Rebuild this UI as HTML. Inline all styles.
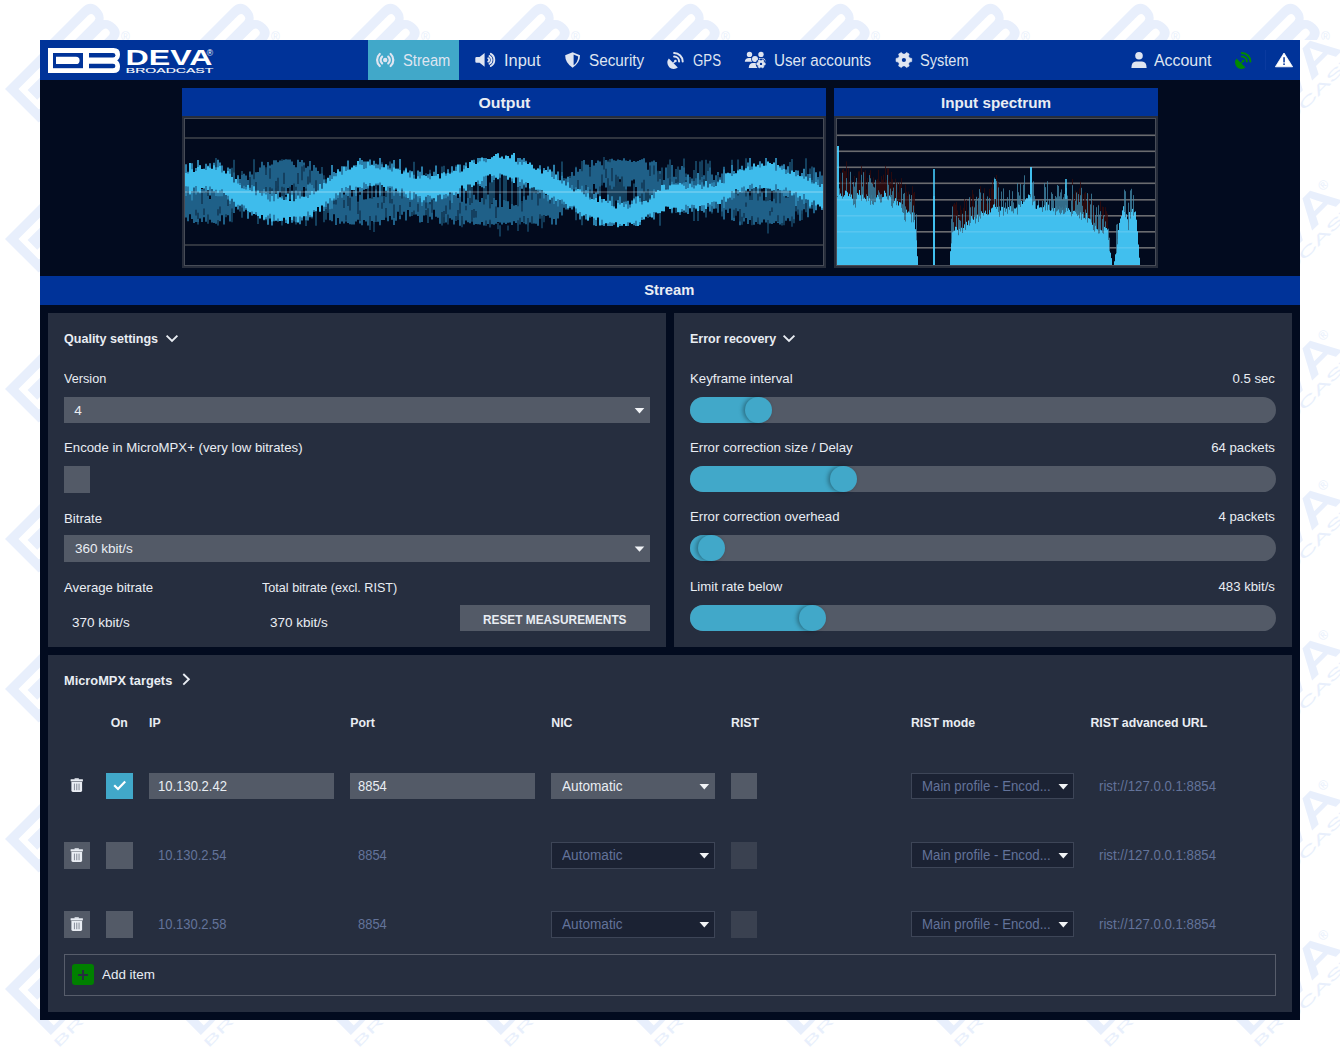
<!DOCTYPE html>
<html><head><meta charset="utf-8"><style>
html,body{margin:0;padding:0}
body{width:1340px;height:1060px;position:relative;overflow:hidden;background:#fff;font-family:"Liberation Sans",sans-serif}
.t{position:absolute;white-space:pre}
.r{position:absolute}
svg{position:absolute;overflow:visible}
</style></head><body>
<svg style="left:0;top:0" width="1340" height="1060"><defs><g id="wb"><path d="M0 0H65.5Q72 0 72 6.3Q72 10.6 69.2 12.5Q72 14.4 72 18.7Q72 25 65.5 25H0Z" fill="#e8effc"/><rect x="5" y="5" width="30" height="15.2" fill="#fff"/><path d="M8 8.8H28Q31.6 8.8 31.6 12.4Q31.6 16 28 16H8Z" fill="#e8effc"/><path d="M41 5H65Q67.4 5 67.4 7.2Q67.4 9.4 65 9.4H41Z" fill="#fff"/><path d="M41 15.8H65Q67.4 15.8 67.4 18Q67.4 20.2 65 20.2H41Z" fill="#fff"/></g><g id="wt"><text x="78" y="17" font-family="Liberation Sans" font-weight="700" font-size="21.5" fill="#e8effc" textLength="86" lengthAdjust="spacingAndGlyphs">DEVA</text><text x="159.5" y="7" font-family="Liberation Sans" font-size="6.5" fill="#e8effc">®</text><text x="78" y="24.8" font-family="Liberation Sans" font-size="6.6" fill="#e8effc" textLength="87.5" lengthAdjust="spacingAndGlyphs">BROADCAST</text></g><clipPath id="cT"><rect x="0" y="0" width="1340" height="40"/></clipPath><clipPath id="cB"><rect x="0" y="1020" width="1340" height="40"/></clipPath><clipPath id="cL"><rect x="0" y="40" width="40" height="980"/></clipPath><clipPath id="cR"><rect x="1300" y="40" width="40" height="980"/></clipPath></defs><g clip-path="url(#cT)"><use href="#wb" transform="translate(-156.3 96.3) rotate(-45) scale(1.9)"/><text x="-29" y="41" font-family="Liberation Sans" font-size="12" fill="#e8effc">®</text><use href="#wb" transform="translate(-6.3 96.3) rotate(-45) scale(1.9)"/><text x="121" y="41" font-family="Liberation Sans" font-size="12" fill="#e8effc">®</text><use href="#wb" transform="translate(143.7 96.3) rotate(-45) scale(1.9)"/><text x="271" y="41" font-family="Liberation Sans" font-size="12" fill="#e8effc">®</text><use href="#wb" transform="translate(293.7 96.3) rotate(-45) scale(1.9)"/><text x="421" y="41" font-family="Liberation Sans" font-size="12" fill="#e8effc">®</text><use href="#wb" transform="translate(443.7 96.3) rotate(-45) scale(1.9)"/><text x="571" y="41" font-family="Liberation Sans" font-size="12" fill="#e8effc">®</text><use href="#wb" transform="translate(593.7 96.3) rotate(-45) scale(1.9)"/><text x="721" y="41" font-family="Liberation Sans" font-size="12" fill="#e8effc">®</text><use href="#wb" transform="translate(743.7 96.3) rotate(-45) scale(1.9)"/><text x="871" y="41" font-family="Liberation Sans" font-size="12" fill="#e8effc">®</text><use href="#wb" transform="translate(893.7 96.3) rotate(-45) scale(1.9)"/><text x="1021" y="41" font-family="Liberation Sans" font-size="12" fill="#e8effc">®</text><use href="#wb" transform="translate(1043.7 96.3) rotate(-45) scale(1.9)"/><text x="1171" y="41" font-family="Liberation Sans" font-size="12" fill="#e8effc">®</text><use href="#wb" transform="translate(1193.7 96.3) rotate(-45) scale(1.9)"/><text x="1321" y="41" font-family="Liberation Sans" font-size="12" fill="#e8effc">®</text><use href="#wb" transform="translate(1343.7 96.3) rotate(-45) scale(1.9)"/><text x="1471" y="41" font-family="Liberation Sans" font-size="12" fill="#e8effc">®</text></g><g clip-path="url(#cB)"><use href="#wt" transform="translate(-229.6 1119.6) rotate(-45) scale(1.9)"/><use href="#wt" transform="translate(-79.6 1119.6) rotate(-45) scale(1.9)"/><use href="#wt" transform="translate(70.4 1119.6) rotate(-45) scale(1.9)"/><use href="#wt" transform="translate(220.4 1119.6) rotate(-45) scale(1.9)"/><use href="#wt" transform="translate(370.4 1119.6) rotate(-45) scale(1.9)"/><use href="#wt" transform="translate(520.4 1119.6) rotate(-45) scale(1.9)"/><use href="#wt" transform="translate(670.4 1119.6) rotate(-45) scale(1.9)"/><use href="#wt" transform="translate(820.4 1119.6) rotate(-45) scale(1.9)"/><use href="#wt" transform="translate(970.4 1119.6) rotate(-45) scale(1.9)"/><use href="#wt" transform="translate(1120.4 1119.6) rotate(-45) scale(1.9)"/><use href="#wt" transform="translate(1270.4 1119.6) rotate(-45) scale(1.9)"/></g><g clip-path="url(#cL)"><use href="#wb" transform="translate(5.0 -61.0) rotate(-45) scale(1.9)"/><use href="#wb" transform="translate(5.0 89.0) rotate(-45) scale(1.9)"/><use href="#wb" transform="translate(5.0 239.0) rotate(-45) scale(1.9)"/><use href="#wb" transform="translate(5.0 389.0) rotate(-45) scale(1.9)"/><use href="#wb" transform="translate(5.0 539.0) rotate(-45) scale(1.9)"/><use href="#wb" transform="translate(5.0 689.0) rotate(-45) scale(1.9)"/><use href="#wb" transform="translate(5.0 839.0) rotate(-45) scale(1.9)"/><use href="#wb" transform="translate(5.0 989.0) rotate(-45) scale(1.9)"/><use href="#wb" transform="translate(5.0 1139.0) rotate(-45) scale(1.9)"/></g><g clip-path="url(#cR)"><use href="#wt" transform="translate(1087.6 257.2) rotate(-45) scale(2.0)"/><use href="#wt" transform="translate(1087.6 407.2) rotate(-45) scale(2.0)"/><use href="#wt" transform="translate(1087.6 557.2) rotate(-45) scale(2.0)"/><use href="#wt" transform="translate(1087.6 707.2) rotate(-45) scale(2.0)"/><use href="#wt" transform="translate(1087.6 857.2) rotate(-45) scale(2.0)"/><use href="#wt" transform="translate(1087.6 1007.2) rotate(-45) scale(2.0)"/><use href="#wt" transform="translate(1087.6 1157.2) rotate(-45) scale(2.0)"/><use href="#wt" transform="translate(1087.6 1307.2) rotate(-45) scale(2.0)"/><use href="#wt" transform="translate(1087.6 1457.2) rotate(-45) scale(2.0)"/></g></svg><div class="r" style="left:40px;top:40px;width:1260px;height:980px;background:#020b1f;"></div><div class="r" style="left:40px;top:40px;width:1260px;height:40px;background:#003399;"></div><div class="r" style="left:368px;top:40px;width:91px;height:40px;background:#41a8c9;"></div><svg style="left:0;top:0" width="1340" height="120"><path d="M48 48H113.5Q120 48 120 54.3Q120 58.6 117.2 60.5Q120 62.4 120 66.7Q120 73 113.5 73H48Z" fill="#fff"/><rect x="53" y="53" width="30" height="15.2" fill="#003399"/><path d="M56 56.8H76Q79.6 56.8 79.6 60.4Q79.6 64 76 64H56Z" fill="#fff"/><path d="M89 53H113Q115.4 53 115.4 55.2Q115.4 57.4 113 57.4H89Z" fill="#003399"/><path d="M89 63.8H113Q115.4 63.8 115.4 66Q115.4 68.2 113 68.2H89Z" fill="#003399"/><text x="125.6" y="65" font-family="Liberation Sans" font-weight="700" font-size="22.3" fill="#fff" textLength="87" lengthAdjust="spacingAndGlyphs">DEVA</text><text x="206.8" y="56.3" font-family="Liberation Sans" font-size="8.5" fill="#fff">®</text><text x="125.8" y="72.6" font-family="Liberation Sans" font-weight="400" font-size="6.5" fill="#fff" stroke="#fff" stroke-width="0.1" textLength="87.5" lengthAdjust="spacingAndGlyphs">BROADCAST</text><circle cx="385.2" cy="60" r="2.2" fill="#dfe5f1"/><path d="M388.28 56.58A4.6 4.6 0 0 1 388.28 63.42" stroke="#dfe5f1" stroke-width="2.2" fill="none" stroke-linecap="round"/><path d="M382.12 63.42A4.6 4.6 0 0 1 382.12 56.58" stroke="#dfe5f1" stroke-width="2.2" fill="none" stroke-linecap="round"/><path d="M390.62 53.98A8.1 8.1 0 0 1 390.62 66.02" stroke="#dfe5f1" stroke-width="2.2" fill="none" stroke-linecap="round"/><path d="M379.78 66.02A8.1 8.1 0 0 1 379.78 53.98" stroke="#dfe5f1" stroke-width="2.2" fill="none" stroke-linecap="round"/><path d="M476.5 57H479.6L484.6 53V66.8L479.6 62.8H476.5Q475.3 62.8 475.3 61.6V58.2Q475.3 57 476.5 57Z" fill="#dfe5f1"/><path d="M488.25 58.25A1.9 1.9 0 0 1 488.25 61.55" stroke="#dfe5f1" stroke-width="1.9" fill="none" stroke-linecap="round"/><path d="M489.50 56.09A4.4 4.4 0 0 1 489.50 63.71" stroke="#dfe5f1" stroke-width="1.9" fill="none" stroke-linecap="round"/><path d="M490.80 53.84A7.0 7.0 0 0 1 490.80 65.96" stroke="#dfe5f1" stroke-width="1.9" fill="none" stroke-linecap="round"/><path d="M572.6 52.3L565.2 55.2Q565 62.5 572.6 67.7Q580.2 62.5 580 55.2Z" fill="#dfe5f1"/><path d="M573.6 54.6L578.2 56.4Q578 62 573.6 65.3Z" fill="#003399"/><path d="M674.0999999999999 53.0A8.6 8.6 0 0 1 682.6999999999999 61.6" stroke="#dfe5f1" stroke-width="2" fill="none" stroke-linecap="round"/><path d="M674.0999999999999 56.6A5.0 5.0 0 0 1 679.0999999999999 61.6" stroke="#dfe5f1" stroke-width="2" fill="none" stroke-linecap="round"/><path d="M668.8 58.6L677.8 67.6A6.4 6.4 0 0 1 668.8 58.6Z" fill="#dfe5f1"/><path d="M670.8 60.6A6.4 6.4 0 0 0 677.3 68.1" fill="none"/><circle cx="675.4" cy="61.0" r="1.3" fill="#dfe5f1"/><path d="M673.3 63.1L675.4 61.0" stroke="#dfe5f1" stroke-width="1.2"/><path d="M1241.8 53.0A8.6 8.6 0 0 1 1250.3999999999999 61.6" stroke="#008a00" stroke-width="2" fill="none" stroke-linecap="round"/><path d="M1241.8 56.6A5.0 5.0 0 0 1 1246.8 61.6" stroke="#008a00" stroke-width="2" fill="none" stroke-linecap="round"/><path d="M1236.5 58.6L1245.5 67.6A6.4 6.4 0 0 1 1236.5 58.6Z" fill="#008a00"/><path d="M1238.5 60.6A6.4 6.4 0 0 0 1245.0 68.1" fill="none"/><circle cx="1243.1" cy="61.0" r="1.3" fill="#008a00"/><path d="M1241.0 63.1L1243.1 61.0" stroke="#008a00" stroke-width="1.2"/><circle cx="749.5" cy="54.4" r="2.7" fill="#dfe5f1"/><circle cx="761" cy="54.4" r="2.7" fill="#dfe5f1"/><path d="M744.8 61.8Q745 58 749 58H752.5V61.8Z" fill="#dfe5f1"/><path d="M758.5 61.8V58H761.5Q765.5 58 765.7 61.8Z" fill="#dfe5f1"/><circle cx="755" cy="58.9" r="3.8" fill="#003399"/><circle cx="755" cy="58.9" r="3.0" fill="#dfe5f1"/><path d="M748.7 68Q749 63 753 63H758.5V68Z" fill="#dfe5f1"/><circle cx="761" cy="63.9" r="5.3" fill="#003399"/><path d="M763.92 62.60L765.19 62.92L765.19 64.88L763.92 65.20L763.59 65.78L763.95 67.03L762.24 68.02L761.33 67.08L760.67 67.08L759.76 68.02L758.05 67.03L758.41 65.78L758.08 65.20L756.81 64.88L756.81 62.92L758.08 62.60L758.41 62.02L758.05 60.77L759.76 59.78L760.67 60.72L761.33 60.72L762.24 59.78L763.95 60.77L763.59 62.02Z" fill="#dfe5f1" stroke="#dfe5f1" stroke-width="0.6" stroke-linejoin="round"/><circle cx="761" cy="63.9" r="1.2" fill="#003399"/><path d="M909.52 57.89L911.74 58.43L911.74 61.57L909.52 62.11L908.54 63.81L909.18 66.01L906.46 67.58L904.88 65.92L902.92 65.92L901.34 67.58L898.62 66.01L899.26 63.81L898.28 62.11L896.06 61.57L896.06 58.43L898.28 57.89L899.26 56.19L898.62 53.99L901.34 52.42L902.92 54.08L904.88 54.08L906.46 52.42L909.18 53.99L908.54 56.19Z" fill="#dfe5f1" stroke="#dfe5f1" stroke-width="0.6" stroke-linejoin="round"/><circle cx="903.9" cy="60" r="2.1" fill="#003399"/><circle cx="1139" cy="55.8" r="3.8" fill="#dfe5f1"/><path d="M1131.4 67.9Q1131.6 61.5 1136 61.5H1142Q1146.4 61.5 1146.6 67.9Z" fill="#dfe5f1"/><rect x="1265" y="50" width="1" height="20" fill="#0a3a9f"/><path d="M1284 53L1292.6 66.8H1275.4Z" fill="#fff" stroke="#fff" stroke-width="0.8" stroke-linejoin="round"/><rect x="1283.3" y="57.2" width="1.5" height="5.2" fill="#003399"/><rect x="1283.3" y="63.4" width="1.5" height="1.6" fill="#003399"/></svg><div class="t" style="left:403px;top:52.30px;font-size:16.3px;line-height:16.3px;font-weight:400;color:#dfe5f1;transform:scaleX(0.9022);transform-origin:left;">Stream</div><div class="t" style="left:504px;top:52.30px;font-size:16.3px;line-height:16.3px;font-weight:400;color:#dfe5f1;transform:scaleX(1.0068);transform-origin:left;">Input</div><div class="t" style="left:589px;top:52.30px;font-size:16.3px;line-height:16.3px;font-weight:400;color:#dfe5f1;transform:scaleX(0.9392);transform-origin:left;">Security</div><div class="t" style="left:692.7px;top:52.30px;font-size:16.3px;line-height:16.3px;font-weight:400;color:#dfe5f1;transform:scaleX(0.8134);transform-origin:left;">GPS</div><div class="t" style="left:774px;top:52.30px;font-size:16.3px;line-height:16.3px;font-weight:400;color:#dfe5f1;transform:scaleX(0.9330);transform-origin:left;">User accounts</div><div class="t" style="left:920.4px;top:52.30px;font-size:16.3px;line-height:16.3px;font-weight:400;color:#dfe5f1;transform:scaleX(0.8943);transform-origin:left;">System</div><div class="t" style="left:1153.6px;top:52.30px;font-size:16.3px;line-height:16.3px;font-weight:400;color:#dfe5f1;transform:scaleX(0.9763);transform-origin:left;">Account</div><div class="r" style="left:182px;top:88px;width:644px;height:28px;background:#003399;"></div><div class="r" style="left:834px;top:88px;width:324px;height:28px;background:#003399;"></div><div class="t" style="left:478.61px;top:94.78px;font-size:15.5px;line-height:15.5px;font-weight:700;color:#e9edf3;transform:scaleX(1.0220);transform-origin:center;">Output</div><div class="t" style="left:939.52px;top:94.78px;font-size:15.5px;line-height:15.5px;font-weight:700;color:#e9edf3;transform:scaleX(0.9826);transform-origin:center;">Input spectrum</div><svg style="left:0;top:0" width="1340" height="1060"><rect x="182" y="116" width="644" height="152" fill="#272d3b"/><rect x="184" y="118" width="640" height="148" fill="#474c57"/><rect x="185" y="119" width="638" height="146" fill="#020a1d"/><rect x="834" y="116" width="324" height="152" fill="#272d3b"/><rect x="836" y="118" width="320" height="148" fill="#474c57"/><rect x="837" y="119" width="318" height="146" fill="#020a1d"/><path d="M198 170.6V224.4M204 170.7V204.9M206 173.5V198.4M208 165.5V223.7M212 179.5V201.9M216 158.0V222.4M218 163.8V225.5M222 184.0V213.1M226 183.4V217.3M232 167.8V202.6M234 159.8V206.4M238 176.3V207.5M240 180.1V211.5M242 171.0V217.7M244 184.3V198.6M250 179.3V208.3M254 159.3V203.1M258 178.4V224.0M262 167.6V212.7M266 178.2V220.3M270 183.5V200.6M272 174.5V223.7M274 183.0V213.3M276 166.6V203.0M278 162.0V217.3M282 159.3V225.6M284 169.0V204.6M290 169.4V199.6M294 171.3V221.5M296 177.8V224.6M302 169.7V202.2M306 170.2V226.0M312 171.2V218.4M314 165.9V209.3M316 168.2V225.7M322 167.1V200.5M324 179.1V222.3M326 179.2V219.7M334 177.0V205.9M336 178.8V217.3M338 183.5V216.2M342 172.8V205.0M346 180.1V216.1M350 175.4V218.7M354 180.8V222.4M362 172.3V202.7M368 176.7V218.2M372 179.1V214.3M376 174.8V219.7M382 162.3V210.3M386 176.5V215.7M388 170.7V204.3M390 161.6V206.9M392 163.2V199.0M394 168.3V215.1M398 182.4V198.0M400 165.5V209.5M402 180.4V208.5M404 174.6V200.7M406 167.2V214.3M412 180.0V216.0M414 161.8V214.7M424 182.1V198.0M426 173.3V215.2M428 175.0V223.0M430 169.7V204.3M432 184.3V208.6M440 184.5V211.9M442 166.6V225.6M444 165.7V211.4M446 174.8V210.4M448 179.1V221.2M450 172.4V205.7M456 165.2V202.3M460 174.4V211.3M468 178.5V206.4M470 167.1V206.3M472 170.5V208.1M478 164.8V210.8M484 158.4V219.8M486 173.5V217.8M490 182.6V208.8M492 181.0V203.5M494 180.4V199.8M500 165.7V219.9M504 170.9V213.4M506 166.9V202.3M512 164.2V220.9M518 177.5V225.4M524 180.7V204.1M532 165.9V223.7M534 174.5V209.6M536 174.8V199.2M538 168.2V200.0M540 173.5V218.8M544 169.7V206.8M548 183.3V208.5M550 176.8V202.2M554 182.6V213.5M558 172.9V205.1M562 161.6V204.6M564 177.9V203.0M570 176.0V200.6M572 174.0V204.7M576 166.7V220.3M578 177.6V199.5M580 183.7V217.1M582 161.1V225.2M588 174.9V207.9M590 167.0V215.2M592 168.4V201.8M600 181.0V212.5M608 160.6V198.9M610 159.1V222.9M612 178.5V198.0M614 182.0V215.3M616 170.6V200.8M618 162.3V208.5M620 181.8V202.3M622 165.5V202.5M624 164.3V211.5M626 183.0V208.3M634 183.5V201.3M638 176.2V218.4M640 163.4V198.7M642 160.1V209.2M646 166.4V211.1M648 177.8V218.1M650 164.5V216.8M656 184.3V198.2M658 179.0V209.5M660 172.8V225.7M662 167.5V200.6M664 182.3V211.8M668 164.6V199.4M670 159.6V205.2M672 166.3V199.4M674 184.2V203.0M676 168.9V212.9M678 166.5V201.0M680 182.9V214.8M684 158.5V213.1M686 173.4V208.5M694 170.1V221.1M696 161.1V206.7M698 178.9V220.9M700 161.5V200.3M702 160.3V210.0M706 159.7V217.6M708 163.4V206.0M710 160.7V209.8M712 178.3V213.6M722 180.1V216.4M730 179.9V208.7M732 159.8V202.7M734 176.2V206.0M736 178.6V213.6M738 159.4V201.6M740 181.2V224.6M744 169.6V208.1M746 158.3V214.4M752 172.3V202.8M756 183.3V220.3M758 166.6V223.6M760 169.7V210.4M766 184.2V214.7M768 180.0V209.7M770 184.4V198.9M774 181.8V209.0M776 165.5V203.6M780 178.3V204.8M782 164.7V225.5M790 161.9V221.3M792 159.0V202.7M794 177.4V223.2M796 179.5V207.1M806 158.3V212.3M810 168.5V206.9M812 166.4V208.7M814 177.0V209.2" stroke="#1a5274" stroke-width="2" opacity="0.75"/><path d="M186 187.8V217.4M188 181.4V221.2M190 194.3V214.3M192 187.4V219.0M194 183.3V223.0M196 179.0V221.9M198 192.6V222.0M200 187.7V218.4M202 188.9V221.9M204 189.5V217.2M206 192.4V221.7M208 195.9V214.5M210 198.9V219.7M212 188.3V222.5M214 187.7V223.1M216 189.9V223.8M218 190.6V219.9M220 196.1V221.2M222 195.7V215.3M224 190.9V224.5M226 194.0V214.2M228 195.0V215.3M230 177.2V221.5M232 186.4V211.9M234 172.4V213.0M236 184.7V204.6M238 174.9V207.0M240 179.0V204.6M242 175.0V207.6M244 173.8V205.3M246 175.6V205.4M248 180.1V200.8M250 171.6V204.8M252 174.4V206.5M254 178.4V195.9M256 172.2V195.7M258 172.0V197.6M260 167.4V200.7M262 161.8V205.0M264 165.2V190.9M266 169.6V187.0M268 162.0V194.5M270 165.5V187.3M272 164.4V190.4M274 160.3V203.7M276 160.3V188.1M278 162.4V186.3M280 160.4V192.2M282 161.0V186.8M284 159.8V187.5M286 159.2V195.1M288 159.4V188.1M290 159.5V186.8M292 161.4V184.9M294 165.0V183.6M296 167.2V186.7M298 159.7V199.1M300 162.0V196.3M302 159.9V190.4M304 162.5V187.1M306 167.8V188.6M308 166.3V198.1M310 161.0V195.1M312 170.8V191.9M314 164.9V200.0M316 167.5V201.0M318 170.9V203.6M320 173.7V200.0M322 173.6V199.5M324 178.9V204.1M326 183.2V209.0M328 181.3V211.6M330 175.1V220.3M332 182.5V221.2M334 185.4V214.2M336 185.9V225.0M338 192.6V218.1M340 179.9V223.8M342 189.5V221.5M344 194.6V223.4M346 193.6V221.5M348 185.6V223.1M350 184.6V224.2M352 196.5V224.4M354 191.0V224.5M356 190.1V221.4M358 201.8V219.7M360 194.7V223.5M362 191.9V225.2M364 199.6V220.1M366 199.3V221.5M368 194.3V225.6M370 198.3V225.8M372 198.7V221.1M374 197.1V224.2M376 189.6V221.8M378 197.2V221.7M380 185.4V225.2M382 196.3V220.1M384 196.0V219.9M386 197.0V216.8M388 189.3V221.2M390 192.6V215.9M392 186.8V219.7M394 182.7V225.1M396 191.0V220.8M398 193.0V211.8M400 176.1V219.3M402 189.1V214.7M404 183.0V211.7M406 183.3V220.6M408 183.8V209.9M410 183.0V216.6M412 182.4V212.1M414 178.9V210.5M416 183.1V214.4M418 177.7V216.1M420 176.6V222.5M422 182.9V222.0M424 182.0V215.5M426 186.6V210.0M428 190.6V208.2M430 184.8V216.7M432 182.4V219.4M434 187.5V209.8M436 179.4V216.7M438 188.4V217.7M440 178.8V223.7M442 192.2V211.9M444 187.9V217.3M446 185.9V222.4M448 195.7V215.1M450 193.9V218.3M452 191.4V219.7M454 194.0V224.5M456 191.2V221.1M458 198.1V216.2M460 187.3V225.7M462 201.8V220.2M464 184.8V224.2M466 203.5V220.4M468 198.1V222.2M470 190.4V223.3M472 203.0V221.4M474 194.8V224.7M476 199.6V224.1M478 200.2V224.2M480 201.9V224.6M482 198.1V222.1M484 204.5V225.6M486 199.2V225.4M488 194.6V223.9M490 208.2V221.4M492 203.9V224.3M494 198.1V224.7M496 200.0V223.7M498 207.3V222.0M500 194.1V222.4M502 207.0V224.6M504 199.9V222.7M506 200.8V224.1M508 201.2V222.7M510 209.0V222.6M512 203.9V225.0M514 205.4V221.3M516 205.0V222.9M518 206.3V225.1M520 186.5V224.3M522 203.2V222.1M524 196.2V223.3M526 199.8V224.3M528 195.6V225.3M530 185.9V222.6M532 199.8V216.2M534 192.5V223.6M536 193.4V223.7M538 191.8V225.7M540 198.5V214.2M542 191.0V218.3M544 194.9V215.3M546 194.7V215.9M548 192.6V215.5M550 189.5V217.7M552 179.9V224.6M554 179.7V219.1M556 176.6V224.7M558 176.0V218.6M560 185.7V212.3M562 171.9V215.4M564 186.3V207.7M566 178.5V209.6M568 180.8V204.7M570 178.0V206.6M572 172.0V208.6M574 175.8V207.2M576 167.8V206.8M578 171.7V199.1M580 169.1V208.9M582 171.2V205.0M584 160.0V203.1M586 164.6V193.6M588 164.8V196.5M590 170.2V189.6M592 159.9V193.5M594 165.5V183.9M596 162.9V188.8M598 160.4V194.3M600 161.5V186.6M602 165.3V183.2M604 160.9V182.7M606 160.1V187.4M608 162.0V183.8M610 162.2V185.5M612 158.7V189.3M614 160.2V186.7M616 160.8V178.2M618 159.6V176.5M620 159.9V179.3M622 160.5V176.5M624 158.3V186.5M626 160.5V189.5M628 161.1V186.4M630 159.7V186.6M632 161.9V180.6M634 160.9V179.6M636 161.8V186.9M638 161.0V199.0M640 160.0V196.3M642 159.3V193.4M644 158.3V200.8M646 162.4V191.5M648 169.8V189.1M650 162.3V195.3M652 161.6V194.4M654 160.4V204.0M656 162.0V200.3M658 172.6V204.8M660 170.9V197.2M662 177.8V197.3M664 179.9V198.1M666 167.5V203.4M668 178.2V200.6M670 177.8V203.0M672 165.0V213.3M674 176.7V204.1M676 177.1V206.1M678 182.5V204.4M680 169.8V215.0M682 166.0V211.7M684 167.5V205.3M686 177.0V204.6M688 176.8V204.4M690 177.0V204.1M692 178.6V205.0M694 180.9V196.1M696 178.3V198.9M698 175.9V200.4M700 179.7V201.3M702 174.3V210.9M704 175.3V199.7M706 181.5V197.7M708 171.1V206.8M710 167.5V204.7M712 174.6V212.0M714 179.9V195.9M716 175.2V208.6M718 172.0V212.8M720 177.2V201.4M722 173.5V211.6M724 166.8V219.6M726 176.2V209.7M728 184.4V213.0M730 186.9V208.3M732 173.9V220.3M734 177.9V221.0M736 193.4V209.9M738 195.6V211.2M740 185.5V225.2M742 187.3V223.4M744 184.3V221.4M746 196.6V217.9M748 191.7V223.9M750 197.2V219.9M752 200.1V217.5M754 188.3V224.7M756 193.2V222.1M758 200.5V220.4M760 196.4V224.6M762 192.6V222.4M764 200.5V219.6M766 201.3V222.6M768 200.8V224.3M770 199.6V223.5M772 201.2V224.0M774 198.8V223.1M776 202.3V221.3M778 189.3V223.0M780 187.5V224.4M782 183.9V223.0M784 185.5V222.5M786 197.6V220.8M788 197.4V218.2M790 192.4V220.7M792 183.7V221.1M794 186.9V219.3M796 191.5V211.1M798 185.5V213.0M800 186.1V220.8M802 185.9V213.7M804 182.7V209.2M806 185.1V203.1M808 173.9V217.2M810 177.0V208.0M812 177.4V203.1M814 167.4V213.2M816 179.1V200.4M818 176.9V199.9M820 171.6V202.6M822 175.5V198.0" stroke="#1f6088" stroke-width="2" opacity="1"/><path d="M196 209.8V215.6M198 212.8V218.9M202 192.7V204.1M204 208.5V215.0M218 209.3V215.4M220 206.4V213.6M228 195.1V206.0M232 208.4V222.2M236 182.5V191.7M238 198.3V208.7M240 191.1V200.1M244 191.6V204.9M250 177.1V188.3M254 173.2V179.2M256 182.0V190.3M260 191.7V203.1M266 167.2V174.9M270 168.2V178.8M272 188.6V202.0M276 181.1V190.4M278 177.8V187.4M284 172.7V184.1M298 172.9V184.1M302 166.6V180.3M304 165.2V171.5M308 176.6V185.7M310 169.8V182.5M312 184.9V189.8M316 180.2V193.9M324 175.3V188.5M328 200.1V213.1M330 181.6V188.0M334 199.5V204.3M336 199.0V204.5M344 200.1V208.1M346 215.3V220.6M348 193.1V206.1M350 197.8V210.6M358 202.3V213.9M360 210.5V221.0M370 216.0V229.9M374 222.0V232.1M376 215.5V221.7M378 203.1V207.8M382 202.4V208.7M384 196.1V202.9M386 208.1V217.8M390 192.6V203.3M392 199.0V203.5M394 204.5V218.0M400 205.1V216.0M402 192.6V198.4M410 201.9V207.1M416 181.2V185.8M418 203.8V211.7M420 184.7V189.9M426 202.4V208.5M430 193.1V204.2M432 199.9V212.7M434 193.4V199.7M444 210.9V223.2M446 205.6V213.9M448 214.5V224.6M450 200.6V209.6M456 216.0V220.9M458 210.0V220.1M460 202.8V213.4M462 215.9V227.3M466 205.7V210.2M470 198.1V205.1M472 210.1V220.7M474 208.9V217.7M476 211.1V217.4M486 220.4V225.2M490 219.7V227.6M496 206.4V218.0M498 223.1V229.2M500 225.2V236.5M508 225.4V230.4M518 220.2V231.1M520 217.7V224.3M522 201.0V211.5M524 216.0V222.5M528 218.1V231.7M532 192.1V199.2M538 194.1V205.5M542 215.7V228.2M544 215.3V222.2M550 191.0V203.4M558 185.8V197.8M562 180.0V192.6M574 189.0V196.2M576 193.7V204.8M578 179.9V192.9M586 185.0V198.5M590 168.9V176.5M602 174.5V185.4M604 157.0V169.5M606 168.7V178.0M608 178.2V190.6M612 167.9V181.3M616 174.8V186.0M642 182.5V188.5M644 179.7V192.3M650 165.5V175.9M654 165.6V174.4M658 170.8V181.6M660 173.8V179.1M662 175.3V187.1M664 191.2V195.9M666 188.8V202.3M670 178.3V192.1M672 184.2V194.6M676 179.2V186.1M678 186.7V196.7M684 201.3V208.4M686 180.3V192.0M690 176.9V183.2M692 185.5V194.1M694 199.8V212.2M696 193.0V204.9M700 197.7V210.4M702 172.5V177.0M704 179.3V184.5M706 192.8V201.9M718 175.0V181.1M722 193.6V199.1M728 178.6V186.6M730 190.2V194.9M734 209.8V217.8M736 208.3V215.7M740 209.0V221.4M742 216.8V224.7M744 212.9V217.8M746 202.4V206.7M750 195.4V199.9M752 216.0V225.3M758 217.4V223.9M768 219.9V233.6M770 210.9V215.6M772 207.5V212.1M776 199.2V203.3M778 215.3V221.9M780 193.1V203.2M784 215.8V225.3M792 216.5V226.7M796 205.9V211.6M798 209.5V214.7M802 210.4V219.9M806 203.7V207.9M808 191.4V196.5M810 190.8V201.7M812 175.3V180.1M820 189.7V197.9M822 187.0V192.1" stroke="#133d5c" stroke-width="2" opacity="0.9"/><path d="M186 164.2V196.0M188 171.8V190.9M190 164.3V193.2M192 163.3V200.5M196 168.0V194.4M198 160.1V192.5M200 164.9V193.4M206 163.8V191.8M210 163.3V195.6M214 162.8V190.4M216 167.3V196.1M218 159.7V196.3M220 162.6V196.3M222 165.5V196.3M224 171.3V190.2M228 167.5V199.4M230 168.7V203.9M238 176.3V209.5M240 182.9V205.8M244 185.8V211.5M246 186.9V209.7M248 184.9V218.8M250 187.7V210.6M252 184.9V215.5M256 192.1V214.8M262 192.9V215.0M264 188.9V220.2M266 191.8V219.0M268 192.9V224.8M270 193.8V218.6M272 191.0V225.4M274 193.5V221.2M278 191.0V221.6M280 198.2V220.3M282 196.2V220.6M286 196.7V223.1M288 196.9V220.2M292 190.8V222.8M296 190.4V222.3M300 191.4V224.2M302 197.6V220.5M306 190.8V220.3M308 184.4V220.6M310 183.7V217.2M312 185.0V217.2M314 188.2V211.7M320 184.6V208.2M324 179.4V211.1M326 182.7V207.1M328 178.9V202.2M330 175.8V209.3M332 165.1V208.8M334 171.9V200.5M336 173.1V199.8M338 169.0V198.0M342 166.2V197.7M344 166.8V192.6M346 166.4V194.7M348 160.6V196.1M354 167.7V189.5M356 165.2V195.9M358 163.9V186.7M360 158.0V191.7M362 159.9V191.5M364 161.6V189.8M366 161.4V189.1M368 165.9V188.6M370 159.5V185.8M374 160.8V185.6M376 163.7V184.8M378 164.4V185.2M380 158.0V195.5M382 164.2V184.4M388 165.6V191.8M390 168.2V187.9M392 163.7V191.8M394 160.1V195.8M396 168.7V189.6M398 168.6V193.2M400 159.1V196.0M402 174.0V190.3M404 170.5V196.4M406 168.1V197.5M410 170.6V199.9M412 171.0V200.1M414 174.8V198.4M418 170.4V201.9M420 171.8V198.3M422 166.6V205.9M424 174.9V201.3M428 174.3V202.6M430 173.6V202.0M434 171.8V198.0M436 165.4V201.9M444 174.6V198.5M446 173.4V198.3M448 169.3V196.8M452 166.2V203.1M454 171.2V192.1M456 166.8V195.7M460 164.5V196.8M464 165.2V187.5M466 162.6V190.2M474 159.8V183.3M478 158.1V184.3M480 158.0V186.0M482 158.0V187.3M484 158.0V188.2M486 158.0V185.9M492 158.0V182.2M494 158.0V180.3M496 158.0V175.4M498 158.0V177.3M500 158.0V177.7M508 158.0V176.1M512 158.0V181.4M518 158.0V187.0M520 158.0V186.4M522 159.5V188.8M524 158.0V185.2M526 160.7V187.5M532 165.6V187.6M538 171.2V190.8M540 165.3V192.8M544 167.9V198.5M546 172.9V193.8M548 166.5V201.2M552 171.5V195.5M554 164.8V204.0M558 171.5V206.6M562 175.7V203.8M564 180.2V204.4M568 176.7V209.6M570 187.4V207.7M572 185.0V209.6M576 187.2V212.3M580 189.0V219.5M582 185.7V214.1M586 189.9V219.6M588 187.0V220.7M590 197.6V217.5M594 193.7V225.3M596 192.4V226.0M600 202.9V220.3M602 199.0V225.3M604 199.1V226.0M608 194.5V226.0M610 200.6V226.0M612 196.2V226.0M614 205.9V224.8M618 200.1V224.6M620 196.5V226.0M624 201.8V224.1M626 201.5V223.5M628 200.8V226.0M630 204.6V223.0M632 200.5V223.5M634 198.2V225.2M636 196.4V226.0M640 198.0V225.1M642 201.8V220.1M650 198.6V216.7M654 189.2V219.4M658 191.2V213.4M662 188.5V209.5M670 185.4V209.1M672 181.8V212.2M674 187.3V208.0M676 183.3V206.5M678 187.6V206.5M680 187.2V205.9M682 183.4V211.5M684 182.6V209.3M686 182.1V212.6M688 174.5V214.0M692 181.2V211.7M694 184.9V207.7M696 186.2V209.3M698 173.0V211.1M700 187.3V205.2M702 182.3V210.9M704 185.9V212.5M710 183.5V211.5M712 182.8V206.3M714 182.2V208.8M724 169.4V207.9M726 173.6V197.8M728 176.6V197.6M730 173.7V197.5M732 165.1V199.7M734 171.1V198.3M738 169.8V193.7M742 165.7V192.4M744 170.8V191.5M746 168.0V190.5M748 162.6V189.1M750 158.0V191.0M752 166.5V189.1M756 167.2V185.6M758 164.8V193.5M760 161.3V188.5M762 168.9V184.1M766 158.0V197.0M770 166.8V188.9M772 167.0V185.5M774 169.0V187.1M776 158.0V191.4M780 166.3V187.4M782 166.0V193.1M784 164.3V196.3M786 169.5V196.3M788 166.2V197.3M792 175.4V193.8M794 171.9V195.2M796 170.3V206.0M798 170.6V200.9M800 176.0V196.3M802 173.1V198.2M804 168.8V204.0M806 181.5V197.6M810 174.0V208.5M812 182.0V204.9M816 172.3V210.3M818 179.5V204.8M822 189.2V210.0" stroke="#2b7fab" stroke-width="2" opacity="1"/><path d="M186 172.9V186.3M188 173.4V186.4M190 163.1V194.5M192 169.3V190.9M194 172.1V187.6M196 171.0V186.0M198 166.9V191.5M200 165.5V192.5M202 169.1V187.9M204 168.7V188.4M206 170.1V186.1M208 166.3V190.1M210 167.8V186.4M212 168.8V189.1M214 165.3V191.3M216 170.0V189.8M218 167.3V192.8M220 165.9V190.6M222 172.5V189.2M224 170.8V193.0M226 173.4V194.9M228 170.9V195.8M230 173.8V200.8M232 177.1V198.8M234 182.5V201.8M236 178.9V206.8M238 183.5V204.8M240 185.0V205.5M242 188.2V204.4M244 188.7V205.6M246 189.6V208.1M248 185.1V211.1M250 190.1V212.3M252 191.3V211.4M254 186.3V214.1M256 195.3V211.9M258 190.6V216.1M260 192.8V218.6M262 195.7V215.1M264 193.3V219.5M266 194.5V217.3M268 199.4V215.6M270 201.6V213.8M272 196.0V221.6M274 201.2V214.8M276 194.0V220.8M278 198.7V218.5M280 197.3V220.9M282 198.4V220.8M284 199.9V217.7M286 199.7V219.7M288 193.5V223.7M290 200.9V217.1M292 194.8V219.9M294 201.2V216.6M296 199.1V216.8M298 195.4V222.4M300 198.4V216.4M302 196.6V217.6M304 196.8V216.3M306 196.4V216.2M308 198.1V211.6M310 194.9V215.2M312 191.1V216.5M314 194.3V210.1M316 191.4V211.2M318 190.5V206.9M320 184.0V211.8M322 188.8V205.4M324 183.1V206.8M326 183.8V201.6M328 177.7V203.5M330 181.0V198.3M332 179.1V200.4M334 176.2V198.5M336 176.2V193.2M338 170.2V195.3M340 171.5V192.2M342 174.7V188.0M344 166.6V190.8M346 171.0V186.9M348 169.8V188.0M350 169.5V185.6M352 167.6V190.0M354 165.6V190.0M356 166.9V186.7M358 160.9V187.5M360 164.4V187.0M362 165.0V188.1M364 168.9V182.6M366 168.3V184.0M368 161.4V186.2M370 165.6V183.0M372 164.8V186.2M374 165.5V185.6M376 168.2V183.6M378 168.3V183.4M380 169.4V182.5M382 167.3V185.1M384 167.2V187.0M386 164.3V190.8M388 169.4V186.4M390 169.7V186.2M392 171.5V186.6M394 167.4V189.8M396 168.7V188.0M398 169.3V191.2M400 170.1V192.4M402 173.8V188.6M404 172.3V191.4M406 169.2V194.3M408 172.5V198.1M410 177.6V191.2M412 172.2V199.4M414 178.6V192.0M416 178.8V194.2M418 176.2V196.2M420 178.5V196.1M422 175.5V202.3M424 175.4V199.9M426 175.9V196.7M428 177.7V195.0M430 179.3V195.8M432 175.9V198.4M434 176.0V198.3M436 175.8V201.2M438 173.9V195.3M440 178.6V194.6M442 173.2V199.2M444 172.3V194.8M446 175.7V194.0M448 173.0V195.4M450 173.8V192.2M452 172.4V192.6M454 170.8V195.0M456 171.0V192.1M458 164.5V193.7M460 172.4V188.3M462 171.4V185.4M464 169.2V188.4M466 166.2V190.8M468 168.1V184.5M470 162.0V184.5M472 160.2V187.1M474 162.7V185.6M476 164.0V182.0M478 162.5V180.4M480 161.2V183.9M482 157.5V181.0M484 161.2V176.5M486 162.2V175.8M488 159.1V175.6M490 159.1V174.2M492 157.2V176.0M494 156.1V175.6M496 154.0V177.7M498 153.2V179.2M500 157.8V173.6M502 156.6V174.4M504 158.8V175.5M506 155.4V175.8M508 155.9V179.8M510 158.3V177.4M512 154.8V178.4M514 153.1V183.1M516 161.7V177.6M518 164.4V177.5M520 162.0V181.9M522 164.7V179.4M524 162.0V183.5M526 162.4V182.3M528 164.0V182.9M530 162.6V188.4M532 164.7V187.4M534 168.6V187.2M536 169.7V189.8M538 168.5V189.5M540 169.6V189.8M542 173.4V190.5M544 170.4V192.6M546 170.0V193.8M548 171.9V195.0M550 169.6V199.7M552 176.9V197.8M554 178.9V196.4M556 174.5V201.0M558 180.1V199.3M560 180.3V199.9M562 183.4V199.4M564 180.9V201.8M566 185.4V203.9M568 182.3V207.9M570 188.0V205.9M572 189.4V206.2M574 191.6V205.7M576 190.3V208.5M578 189.1V213.6M580 189.4V211.9M582 192.2V216.3M584 194.3V215.5M586 196.7V214.0M588 193.3V220.2M590 199.6V215.5M592 199.0V216.7M594 199.6V218.2M596 198.0V220.1M598 201.9V217.5M600 196.3V225.4M602 202.4V219.7M604 199.1V224.3M606 200.8V223.3M608 203.1V223.5M610 200.9V222.3M612 205.9V222.8M614 207.3V223.1M616 208.6V222.3M618 202.9V227.2M620 204.6V224.0M622 202.8V225.8M624 207.0V224.1M626 204.2V226.0M628 208.7V222.3M630 207.4V221.9M632 203.9V224.0M634 199.4V223.0M636 203.5V220.7M638 196.3V226.1M640 201.7V222.1M642 204.4V217.2M644 201.1V219.5M646 200.7V216.7M648 202.3V214.5M650 199.8V213.5M652 194.8V217.5M654 198.3V211.9M656 191.9V212.5M658 189.9V213.0M660 190.7V213.1M662 185.0V211.3M664 184.7V211.2M666 189.6V206.4M668 189.5V206.7M670 185.4V209.0M672 184.4V208.5M674 184.4V207.1M676 184.7V207.8M678 184.4V212.3M680 183.1V212.3M682 184.5V209.0M684 185.7V210.5M686 189.0V204.7M688 188.0V206.0M690 183.8V208.2M692 187.3V204.7M694 188.4V205.1M696 185.4V208.0M698 184.2V211.0M700 184.7V206.1M702 189.0V205.3M704 186.8V205.3M706 181.1V209.0M708 187.6V202.9M710 183.9V204.6M712 186.2V202.0M714 187.1V201.5M716 185.9V201.7M718 182.2V204.0M720 179.8V204.0M722 183.0V199.8M724 183.3V196.8M726 173.5V201.8M728 172.8V198.6M730 173.2V197.5M732 176.1V191.0M734 174.0V192.7M736 173.3V189.0M738 170.7V190.1M740 169.3V192.1M742 169.9V187.6M744 170.4V186.5M746 168.6V190.4M748 166.4V188.7M750 170.1V185.0M752 169.5V183.8M754 163.5V188.2M756 166.5V187.0M758 165.1V188.5M760 167.5V185.0M762 163.5V188.6M764 165.7V188.1M766 165.5V188.1M768 161.4V188.4M770 163.1V188.4M772 163.9V190.8M774 162.4V190.2M776 170.7V184.2M778 164.9V189.1M780 167.8V190.2M782 169.7V190.5M784 169.1V189.7M786 174.1V187.6M788 172.7V190.7M790 173.8V190.7M792 170.5V195.5M794 171.9V193.3M796 176.2V192.1M798 174.9V197.5M800 176.3V195.9M802 176.3V199.4M804 178.7V194.0M806 176.5V199.3M808 180.8V199.8M810 178.0V206.4M812 183.4V202.3M814 183.5V200.5M816 181.9V205.6M818 184.9V204.0M820 187.1V206.5M822 184.1V208.2" stroke="#3ebcec" stroke-width="2" opacity="1"/><rect x="185" y="137" width="638" height="2" fill="#30353f"/><rect x="185" y="244" width="638" height="2" fill="#30353f"/><rect x="185" y="191" width="638" height="2" fill="#ffffff" opacity="0.2"/><rect x="837" y="134.5" width="318" height="1.6" fill="#56575c"/><rect x="837" y="150.5" width="318" height="1.6" fill="#56575c"/><rect x="837" y="166.5" width="318" height="1.6" fill="#56575c"/><rect x="837" y="182.5" width="318" height="1.6" fill="#56575c"/><rect x="837" y="199" width="318" height="1.6" fill="#56575c"/><rect x="837" y="215" width="318" height="1.6" fill="#56575c"/><rect x="837" y="231" width="318" height="1.6" fill="#56575c"/><rect x="837" y="247" width="318" height="1.6" fill="#56575c"/><path d="M840.5 172.8V193.5M841.5 181.3V196.1M842.5 169.5V193.3M843.5 168.9V196.6M844.5 170.9V195.2M845.5 171.3V190.6M846.5 161.3V190.8M847.5 180.4V192.3M848.5 168.0V196.1M849.5 183.3V193.7M850.5 171.6V195.3M851.5 180.6V194.5M852.5 187.0V198.7M853.5 185.7V198.6M854.5 175.9V199.9M855.5 185.2V199.8M856.5 185.7V194.3M857.5 180.9V193.1M858.5 171.5V194.7M859.5 171.3V190.0M860.5 180.2V195.2M861.5 165.7V194.1M862.5 183.7V193.9M863.5 171.3V192.8M864.5 172.0V197.6M865.5 170.1V199.1M866.5 189.4V199.7M867.5 177.9V196.0M868.5 188.2V198.0M869.5 173.0V194.1M870.5 170.2V199.0M871.5 184.3V194.9M872.5 182.2V198.6M873.5 177.4V198.1M874.5 187.6V196.7M875.5 180.4V194.3M876.5 180.9V197.4M877.5 179.1V194.9M878.5 169.8V194.7M879.5 181.2V197.6M880.5 182.6V200.3M881.5 176.1V199.2M882.5 179.6V197.2M883.5 174.7V196.9M884.5 182.2V190.7M885.5 165.6V192.8M886.5 180.1V196.4M887.5 168.5V196.1M888.5 168.1V198.0M889.5 181.3V195.6M890.5 182.5V194.2M891.5 172.0V199.4M892.5 179.3V200.5M893.5 192.4V201.1M894.5 184.6V200.8M895.5 178.7V198.1M896.5 192.2V202.2M897.5 182.6V201.1M898.5 192.2V205.5M899.5 182.2V202.1M900.5 183.9V202.5M901.5 178.1V203.0M902.5 199.9V209.1M903.5 199.3V207.7M904.5 196.4V212.5M905.5 184.3V214.0M906.5 191.7V209.6M907.5 196.0V212.6M908.5 191.4V211.5M909.5 195.1V210.8M910.5 203.7V213.0M911.5 202.6V216.4M912.5 186.2V212.4M913.5 193.5V215.3M914.5 191.9V219.6M953.5 204.6V227.6M954.5 203.0V230.6M955.5 204.5V226.7M956.5 201.9V226.5M957.5 210.5V229.8M958.5 216.2V227.6M959.5 215.7V225.6M960.5 205.4V227.7M961.5 209.9V227.7M962.5 217.5V228.7M963.5 207.8V228.0M964.5 199.1V224.3M965.5 212.4V222.8M966.5 199.9V221.8M967.5 214.6V225.1M968.5 210.3V220.5M969.5 201.8V222.6M970.5 196.4V220.3M971.5 206.7V216.1M972.5 190.0V217.1M973.5 194.3V219.7M974.5 206.1V216.4M975.5 201.7V216.1M976.5 199.4V217.7M977.5 204.7V214.6M978.5 196.5V214.2M979.5 200.7V213.3M980.5 186.2V214.4M981.5 202.1V211.3M982.5 195.3V213.0M983.5 194.5V213.5M984.5 188.1V212.7M985.5 198.1V210.6M986.5 203.7V214.0M987.5 198.5V210.2M988.5 202.8V214.4M989.5 188.9V209.7M990.5 201.8V212.4M991.5 187.4V208.4M992.5 180.3V207.6M993.5 189.2V204.6M994.5 185.9V203.1M995.5 182.3V206.9M996.5 174.9V203.7M997.5 180.4V206.9M998.5 182.9V207.0M999.5 198.9V210.4M1071.5 199.4V211.3M1072.5 178.9V206.4M1073.5 194.3V210.9M1074.5 199.9V210.7M1075.5 190.5V208.6M1076.5 193.3V210.2M1077.5 191.4V209.4M1078.5 197.5V210.9M1079.5 188.4V213.5M1080.5 181.7V210.2M1081.5 204.6V213.6M1082.5 194.5V212.5M1083.5 202.5V217.4M1084.5 193.5V217.8M1085.5 192.0V217.2M1086.5 201.0V212.9M1087.5 207.5V215.8M1088.5 194.0V218.1M1089.5 202.2V218.6M1090.5 209.6V218.4M1091.5 205.3V218.7M1092.5 200.4V224.8M1093.5 206.5V223.2M1094.5 212.5V227.0M1095.5 216.0V224.1M1096.5 206.4V227.2M1097.5 218.7V229.3M1098.5 204.4V228.5M1099.5 219.2V228.9M1100.5 201.3V225.7M1101.5 215.6V230.3M1102.5 206.6V229.0M1103.5 207.0V229.2M1104.5 216.7V226.9M1105.5 207.1V226.0M1106.5 211.2V228.0M1107.5 213.7V229.5" stroke="#2a0a0e" stroke-width="1" opacity="1"/><path d="M837.5 194.2V265.0M838.5 194.2V265.0M839.5 194.1V265.0M840.5 193.5V265.0M841.5 196.1V265.0M842.5 193.3V265.0M843.5 196.6V265.0M844.5 195.2V265.0M845.5 190.6V265.0M846.5 190.8V265.0M847.5 192.3V265.0M848.5 196.1V265.0M849.5 193.7V265.0M850.5 195.3V265.0M851.5 194.5V265.0M852.5 198.7V265.0M853.5 198.6V265.0M854.5 199.9V265.0M855.5 199.8V265.0M856.5 194.3V265.0M857.5 193.1V265.0M858.5 194.7V265.0M859.5 190.0V265.0M860.5 195.2V265.0M861.5 194.1V265.0M862.5 193.9V265.0M863.5 192.8V265.0M864.5 197.6V265.0M865.5 199.1V265.0M866.5 199.7V265.0M867.5 196.0V265.0M868.5 198.0V265.0M869.5 194.1V265.0M870.5 199.0V265.0M871.5 194.9V265.0M872.5 198.6V265.0M873.5 198.1V265.0M874.5 196.7V265.0M875.5 194.3V265.0M876.5 197.4V265.0M877.5 194.9V265.0M878.5 194.7V265.0M879.5 197.6V265.0M880.5 200.3V265.0M881.5 199.2V265.0M882.5 197.2V265.0M883.5 196.9V265.0M884.5 190.7V265.0M885.5 192.8V265.0M886.5 196.4V265.0M887.5 196.1V265.0M888.5 198.0V265.0M889.5 195.6V265.0M890.5 194.2V265.0M891.5 199.4V265.0M892.5 200.5V265.0M893.5 201.1V265.0M894.5 200.8V265.0M895.5 198.1V265.0M896.5 202.2V265.0M897.5 201.1V265.0M898.5 205.5V265.0M899.5 202.1V265.0M900.5 202.5V265.0M901.5 203.0V265.0M902.5 209.1V265.0M903.5 207.7V265.0M904.5 212.5V265.0M905.5 214.0V265.0M906.5 209.6V265.0M907.5 212.6V265.0M908.5 211.5V265.0M909.5 210.8V265.0M910.5 213.0V265.0M911.5 216.4V265.0M912.5 212.4V265.0M913.5 215.3V265.0M914.5 219.6V265.0M915.5 229.2V265.0M916.5 236.3V265.0M917.5 256.2V265.0M950.5 251.2V265.0M951.5 238.5V265.0M952.5 231.4V265.0M953.5 227.6V265.0M954.5 230.6V265.0M955.5 226.7V265.0M956.5 226.5V265.0M957.5 229.8V265.0M958.5 227.6V265.0M959.5 225.6V265.0M960.5 227.7V265.0M961.5 227.7V265.0M962.5 228.7V265.0M963.5 228.0V265.0M964.5 224.3V265.0M965.5 222.8V265.0M966.5 221.8V265.0M967.5 225.1V265.0M968.5 220.5V265.0M969.5 222.6V265.0M970.5 220.3V265.0M971.5 216.1V265.0M972.5 217.1V265.0M973.5 219.7V265.0M974.5 216.4V265.0M975.5 216.1V265.0M976.5 217.7V265.0M977.5 214.6V265.0M978.5 214.2V265.0M979.5 213.3V265.0M980.5 214.4V265.0M981.5 211.3V265.0M982.5 213.0V265.0M983.5 213.5V265.0M984.5 212.7V265.0M985.5 210.6V265.0M986.5 214.0V265.0M987.5 210.2V265.0M988.5 214.4V265.0M989.5 209.7V265.0M990.5 212.4V265.0M991.5 208.4V265.0M992.5 207.6V265.0M993.5 204.6V265.0M994.5 203.1V265.0M995.5 206.9V265.0M996.5 203.7V265.0M997.5 206.9V265.0M998.5 207.0V265.0M999.5 210.4V265.0M1000.5 210.6V265.0M1001.5 206.0V265.0M1002.5 206.9V265.0M1003.5 210.6V265.0M1004.5 207.7V265.0M1005.5 206.6V265.0M1006.5 208.6V265.0M1007.5 208.0V265.0M1008.5 207.0V265.0M1009.5 209.2V265.0M1010.5 206.1V265.0M1011.5 205.2V265.0M1012.5 204.9V265.0M1013.5 206.9V265.0M1014.5 208.4V265.0M1015.5 208.5V265.0M1016.5 207.5V265.0M1017.5 206.5V265.0M1018.5 203.7V265.0M1019.5 204.4V265.0M1020.5 203.9V265.0M1021.5 201.0V265.0M1022.5 204.0V265.0M1023.5 198.6V265.0M1024.5 196.2V265.0M1025.5 199.8V265.0M1026.5 198.2V265.0M1027.5 198.3V265.0M1028.5 194.5V265.0M1029.5 195.1V265.0M1030.5 194.7V265.0M1031.5 192.8V265.0M1032.5 198.5V265.0M1033.5 198.7V265.0M1034.5 200.0V265.0M1035.5 204.3V265.0M1036.5 208.9V265.0M1037.5 205.4V265.0M1038.5 204.2V265.0M1039.5 207.6V265.0M1040.5 207.2V265.0M1041.5 207.3V265.0M1042.5 208.5V265.0M1043.5 207.1V265.0M1044.5 204.9V265.0M1045.5 205.7V265.0M1046.5 202.1V265.0M1047.5 204.0V265.0M1048.5 204.7V265.0M1049.5 204.7V265.0M1050.5 210.7V265.0M1051.5 206.6V265.0M1052.5 207.7V265.0M1053.5 210.5V265.0M1054.5 208.0V265.0M1055.5 207.6V265.0M1056.5 206.0V265.0M1057.5 207.9V265.0M1058.5 209.0V265.0M1059.5 206.1V265.0M1060.5 207.6V265.0M1061.5 207.8V265.0M1062.5 206.7V265.0M1063.5 209.4V265.0M1064.5 207.8V265.0M1065.5 205.0V265.0M1066.5 205.7V265.0M1067.5 209.7V265.0M1068.5 208.2V265.0M1069.5 209.8V265.0M1070.5 211.8V265.0M1071.5 211.3V265.0M1072.5 206.4V265.0M1073.5 210.9V265.0M1074.5 210.7V265.0M1075.5 208.6V265.0M1076.5 210.2V265.0M1077.5 209.4V265.0M1078.5 210.9V265.0M1079.5 213.5V265.0M1080.5 210.2V265.0M1081.5 213.6V265.0M1082.5 212.5V265.0M1083.5 217.4V265.0M1084.5 217.8V265.0M1085.5 217.2V265.0M1086.5 212.9V265.0M1087.5 215.8V265.0M1088.5 218.1V265.0M1089.5 218.6V265.0M1090.5 218.4V265.0M1091.5 218.7V265.0M1092.5 224.8V265.0M1093.5 223.2V265.0M1094.5 227.0V265.0M1095.5 224.1V265.0M1096.5 227.2V265.0M1097.5 229.3V265.0M1098.5 228.5V265.0M1099.5 228.9V265.0M1100.5 225.7V265.0M1101.5 230.3V265.0M1102.5 229.0V265.0M1103.5 229.2V265.0M1104.5 226.9V265.0M1105.5 226.0V265.0M1106.5 228.0V265.0M1107.5 229.5V265.0M1108.5 237.7V265.0M1109.5 247.4V265.0M1110.5 252.7V265.0M1111.5 258.1V265.0M1114.5 261.3V265.0M1115.5 254.3V265.0M1116.5 245.5V265.0M1117.5 239.0V265.0M1118.5 230.0V265.0M1119.5 222.9V265.0M1120.5 218.5V265.0M1121.5 216.1V265.0M1122.5 210.4V265.0M1123.5 206.2V265.0M1124.5 210.2V265.0M1125.5 211.1V265.0M1126.5 214.3V265.0M1127.5 219.2V265.0M1128.5 222.4V265.0M1129.5 212.0V265.0M1130.5 211.7V265.0M1131.5 206.4V265.0M1132.5 208.9V265.0M1133.5 208.5V265.0M1134.5 212.2V265.0M1135.5 211.5V265.0M1136.5 219.7V265.0M1137.5 231.3V265.0M1138.5 244.5V265.0M1139.5 257.7V265.0" stroke="#41bfee" stroke-width="1" opacity="1"/><path d="M837.5 172.7V197.1M839.5 188.4V194.8M842.5 172.7V198.6M846.5 178.1V190.8M850.5 171.8V197.0M853.5 182.1V205.2M854.5 186.6V204.2M855.5 182.5V207.6M856.5 177.9V199.2M861.5 174.8V200.8M862.5 186.5V194.7M863.5 172.2V198.7M866.5 194.3V201.4M868.5 182.1V201.0M869.5 175.1V198.1M870.5 178.3V204.8M871.5 183.1V200.8M872.5 183.7V204.2M873.5 186.7V204.9M874.5 187.5V202.1M875.5 179.8V202.2M878.5 190.3V196.7M879.5 192.5V199.4M880.5 194.5V202.6M881.5 194.1V202.4M887.5 174.9V199.5M888.5 184.7V200.2M890.5 188.6V197.2M891.5 195.0V206.1M892.5 191.2V207.8M893.5 187.6V203.2M896.5 184.1V205.2M901.5 188.0V207.9M902.5 204.2V212.2M903.5 193.8V213.0M904.5 192.9V220.0M905.5 206.4V221.5M909.5 194.4V212.5M910.5 201.5V214.2M911.5 195.1V222.3M913.5 205.5V222.3M914.5 212.6V220.0M916.5 214.2V240.3M951.5 218.7V243.4M952.5 206.5V232.3M953.5 222.2V231.3M956.5 215.9V226.5M958.5 217.8V235.2M959.5 219.9V229.0M960.5 220.7V231.7M962.5 213.8V233.0M965.5 210.9V229.9M969.5 197.2V225.6M970.5 207.3V223.0M972.5 206.5V218.6M974.5 207.4V216.6M975.5 200.8V223.5M976.5 196.8V218.6M978.5 198.1V222.0M979.5 189.1V216.4M980.5 192.5V218.6M983.5 193.2V215.6M987.5 196.4V215.2M989.5 197.9V210.1M994.5 177.6V204.2M996.5 180.9V209.0M998.5 187.4V212.0M999.5 206.4V216.8M1001.5 191.5V207.0M1003.5 188.4V215.8M1005.5 202.4V211.8M1007.5 197.2V213.8M1009.5 190.1V209.7M1011.5 200.9V211.4M1012.5 191.2V211.3M1013.5 202.4V213.3M1017.5 183.1V214.5M1018.5 192.2V204.5M1019.5 195.5V204.4M1020.5 183.9V207.0M1023.5 184.7V201.9M1024.5 175.3V201.7M1030.5 186.5V197.3M1032.5 182.8V205.2M1033.5 181.4V201.6M1034.5 195.8V201.2M1035.5 200.1V208.7M1038.5 200.0V204.7M1042.5 200.8V211.9M1044.5 182.9V205.4M1045.5 187.1V210.5M1047.5 181.2V210.3M1049.5 198.9V209.9M1051.5 192.3V210.2M1052.5 193.9V208.3M1053.5 200.2V211.3M1055.5 196.0V215.1M1056.5 197.4V211.5M1057.5 185.0V210.6M1058.5 185.9V209.5M1059.5 196.3V212.7M1060.5 192.4V214.4M1061.5 189.4V212.8M1062.5 199.8V210.2M1063.5 197.3V214.2M1064.5 194.0V213.7M1065.5 184.4V212.2M1066.5 187.9V207.9M1067.5 195.6V211.0M1071.5 200.3V216.3M1072.5 185.2V214.0M1075.5 200.8V211.9M1076.5 192.5V213.7M1077.5 204.7V216.0M1078.5 194.1V214.9M1079.5 202.0V218.4M1080.5 195.2V212.4M1081.5 187.8V219.9M1082.5 205.8V214.0M1083.5 212.0V218.3M1085.5 209.5V219.3M1087.5 193.1V222.6M1090.5 204.4V219.4M1091.5 193.7V222.6M1093.5 205.2V230.0M1094.5 222.8V231.7M1095.5 215.1V225.8M1096.5 207.2V228.9M1098.5 205.3V233.5M1099.5 214.6V233.3M1100.5 211.2V229.8M1102.5 218.9V232.8M1103.5 215.4V233.7M1105.5 221.4V228.2M1108.5 228.7V240.0M1109.5 237.7V251.2M1116.5 224.6V253.2M1117.5 223.9V244.3M1124.5 189.6V212.0M1125.5 191.2V217.2M1128.5 202.7V230.1M1130.5 190.4V218.6M1131.5 188.8V212.0M1133.5 195.1V215.8" stroke="#36728f" stroke-width="1" opacity="0.95"/><rect x="837" y="146" width="2" height="50" fill="#41bfee"/><rect x="933" y="169" width="2" height="96" fill="#41bfee" opacity="0.85"/><rect x="933" y="196" width="2" height="69" fill="#41bfee"/><rect x="1030" y="167" width="2" height="27" fill="#41bfee"/><rect x="994" y="179" width="2" height="20" fill="#41bfee" opacity="0.8"/><rect x="1065" y="179" width="2" height="20" fill="#41bfee" opacity="0.8"/><rect x="837" y="134.5" width="318" height="1.6" fill="#ffffff" opacity="0.12"/><rect x="837" y="150.5" width="318" height="1.6" fill="#ffffff" opacity="0.12"/><rect x="837" y="166.5" width="318" height="1.6" fill="#ffffff" opacity="0.12"/><rect x="837" y="182.5" width="318" height="1.6" fill="#ffffff" opacity="0.12"/><rect x="837" y="199" width="318" height="1.6" fill="#ffffff" opacity="0.12"/><rect x="837" y="215" width="318" height="1.6" fill="#ffffff" opacity="0.12"/><rect x="837" y="231" width="318" height="1.6" fill="#ffffff" opacity="0.12"/><rect x="837" y="247" width="318" height="1.6" fill="#ffffff" opacity="0.12"/></svg><div class="r" style="left:40px;top:276px;width:1260px;height:29px;background:#003399;"></div><div class="t" style="left:643.22px;top:281.78px;font-size:15.5px;line-height:15.5px;font-weight:700;color:#e9edf3;transform:scaleX(0.9514);transform-origin:center;">Stream</div><div class="r" style="left:48px;top:313px;width:618px;height:334px;background:#262e3f;"></div><div class="r" style="left:674px;top:313px;width:618px;height:334px;background:#262e3f;"></div><div class="r" style="left:48px;top:655px;width:1244px;height:357px;background:#262e3f;"></div><div class="t" style="left:64px;top:333.22px;font-size:12.5px;line-height:12.5px;font-weight:700;color:#e9edf3;transform:scaleX(1.0035);transform-origin:left;">Quality settings</div><div class="t" style="left:64px;top:372.23px;font-size:13.2px;line-height:13.2px;font-weight:400;color:#e9edf3;transform:scaleX(0.9607);transform-origin:left;">Version</div><div class="r" style="left:64px;top:397px;width:586px;height:26px;background:#535a67;"></div><div class="t" style="left:74.3px;top:403.59px;font-size:13.6px;line-height:13.6px;font-weight:400;color:#e9edf3;">4</div><div class="t" style="left:64px;top:441.43px;font-size:13.2px;line-height:13.2px;font-weight:400;color:#e9edf3;">Encode in MicroMPX+ (very low bitrates)</div><div class="r" style="left:64px;top:466px;width:26px;height:27px;background:#535a67;"></div><div class="t" style="left:64px;top:511.63px;font-size:13.2px;line-height:13.2px;font-weight:400;color:#e9edf3;">Bitrate</div><div class="r" style="left:64px;top:535px;width:586px;height:27px;background:#535a67;"></div><div class="t" style="left:74.5px;top:542.49px;font-size:13.6px;line-height:13.6px;font-weight:400;color:#e9edf3;transform:scaleX(0.9946);transform-origin:left;">360 kbit/s</div><div class="t" style="left:64px;top:580.63px;font-size:13.2px;line-height:13.2px;font-weight:400;color:#e9edf3;">Average bitrate</div><div class="t" style="left:262.2px;top:580.63px;font-size:13.2px;line-height:13.2px;font-weight:400;color:#e9edf3;transform:scaleX(0.9564);transform-origin:left;">Total bitrate (excl. RIST)</div><div class="t" style="left:71.5px;top:615.79px;font-size:13.6px;line-height:13.6px;font-weight:400;color:#e9edf3;transform:scaleX(0.9946);transform-origin:left;">370 kbit/s</div><div class="t" style="left:269.6px;top:615.79px;font-size:13.6px;line-height:13.6px;font-weight:400;color:#e9edf3;transform:scaleX(0.9946);transform-origin:left;">370 kbit/s</div><div class="r" style="left:460px;top:605px;width:190px;height:26px;background:#535a67;"></div><div class="t" style="left:475.67px;top:612.50px;font-size:13px;line-height:13px;font-weight:700;color:#e9edf3;transform:scaleX(0.9120);transform-origin:center;">RESET MEASUREMENTS</div><div class="t" style="left:690px;top:333.22px;font-size:12.5px;line-height:12.5px;font-weight:700;color:#e9edf3;">Error recovery</div><div class="t" style="left:690px;top:372.13px;font-size:13.2px;line-height:13.2px;font-weight:400;color:#e9edf3;">Keyframe interval</div><div class="t" style="left:1232.44px;top:372.03px;font-size:13.2px;line-height:13.2px;font-weight:400;color:#e9edf3;">0.5 sec</div><div class="r" style="left:690px;top:397px;width:586px;height:26px;background:#535a67;border-radius:13px"></div><div class="r" style="left:690px;top:397px;width:68.5px;height:26px;background:#41a8c9;border-radius:13px 0 0 13px"></div><div class="r" style="left:745.0px;top:397px;width:27px;height:26px;background:#41a8c9;border-radius:13px;box-shadow:-2px 0 4px rgba(0,0,0,.35)"></div><div class="t" style="left:690px;top:441.13px;font-size:13.2px;line-height:13.2px;font-weight:400;color:#e9edf3;">Error correction size / Delay</div><div class="t" style="left:1211.16px;top:441.03px;font-size:13.2px;line-height:13.2px;font-weight:400;color:#e9edf3;">64 packets</div><div class="r" style="left:690px;top:466px;width:586px;height:26px;background:#535a67;border-radius:13px"></div><div class="r" style="left:690px;top:466px;width:153.5px;height:26px;background:#41a8c9;border-radius:13px 0 0 13px"></div><div class="r" style="left:830.0px;top:466px;width:27px;height:26px;background:#41a8c9;border-radius:13px;box-shadow:-2px 0 4px rgba(0,0,0,.35)"></div><div class="t" style="left:690px;top:510.13px;font-size:13.2px;line-height:13.2px;font-weight:400;color:#e9edf3;">Error correction overhead</div><div class="t" style="left:1218.50px;top:510.03px;font-size:13.2px;line-height:13.2px;font-weight:400;color:#e9edf3;">4 packets</div><div class="r" style="left:690px;top:535px;width:586px;height:26px;background:#535a67;border-radius:13px"></div><div class="r" style="left:690px;top:535px;width:21.5px;height:26px;background:#41a8c9;border-radius:13px 0 0 13px"></div><div class="r" style="left:698.0px;top:535px;width:27px;height:26px;background:#41a8c9;border-radius:13px;box-shadow:-2px 0 4px rgba(0,0,0,.35)"></div><div class="t" style="left:690px;top:580.13px;font-size:13.2px;line-height:13.2px;font-weight:400;color:#e9edf3;">Limit rate below</div><div class="t" style="left:1218.50px;top:580.03px;font-size:13.2px;line-height:13.2px;font-weight:400;color:#e9edf3;">483 kbit/s</div><div class="r" style="left:690px;top:605px;width:586px;height:26px;background:#535a67;border-radius:13px"></div><div class="r" style="left:690px;top:605px;width:122px;height:26px;background:#41a8c9;border-radius:13px 0 0 13px"></div><div class="r" style="left:798.5px;top:605px;width:27px;height:26px;background:#41a8c9;border-radius:13px;box-shadow:-2px 0 4px rgba(0,0,0,.35)"></div><div class="t" style="left:64px;top:675.19px;font-size:12.3px;line-height:12.3px;font-weight:700;color:#e9edf3;transform:scaleX(1.0424);transform-origin:left;">MicroMPX targets</div><div class="t" style="left:110.7px;top:717.39px;font-size:12.3px;line-height:12.3px;font-weight:700;color:#e9edf3;">On</div><div class="t" style="left:149.1px;top:717.39px;font-size:12.3px;line-height:12.3px;font-weight:700;color:#e9edf3;">IP</div><div class="t" style="left:350.3px;top:717.39px;font-size:12.3px;line-height:12.3px;font-weight:700;color:#e9edf3;">Port</div><div class="t" style="left:551.3px;top:717.39px;font-size:12.3px;line-height:12.3px;font-weight:700;color:#e9edf3;">NIC</div><div class="t" style="left:731px;top:717.39px;font-size:12.3px;line-height:12.3px;font-weight:700;color:#e9edf3;">RIST</div><div class="t" style="left:910.9px;top:717.39px;font-size:12.3px;line-height:12.3px;font-weight:700;color:#e9edf3;">RIST mode</div><div class="t" style="left:1090.4px;top:717.39px;font-size:12.3px;line-height:12.3px;font-weight:700;color:#e9edf3;">RIST advanced URL</div><div class="r" style="left:106px;top:773px;width:27px;height:26px;background:#41a8c9;"></div><div class="r" style="left:149px;top:773px;width:185px;height:26px;background:#535a67;"></div><div class="r" style="left:350px;top:773px;width:185px;height:26px;background:#535a67;"></div><div class="t" style="left:157.9px;top:778.95px;font-size:14px;line-height:14px;font-weight:400;color:#e9edf3;transform:scaleX(0.9329);transform-origin:left;">10.130.2.42</div><div class="t" style="left:358px;top:778.95px;font-size:14px;line-height:14px;font-weight:400;color:#e9edf3;transform:scaleX(0.9247);transform-origin:left;">8854</div><div class="r" style="left:551px;top:773px;width:164px;height:26px;background:#535a67;"></div><div class="t" style="left:562px;top:778.95px;font-size:14px;line-height:14px;font-weight:400;color:#e9edf3;transform:scaleX(0.9719);transform-origin:left;">Automatic</div><div class="r" style="left:731px;top:773px;width:26px;height:26px;background:#535a67;"></div><div class="r" style="left:911px;top:773px;width:163px;height:26px;background:#1b2233;box-sizing:border-box;border:1px solid #3d4557"></div><div class="t" style="left:922px;top:778.95px;font-size:14px;line-height:14px;font-weight:400;color:#63739a;transform:scaleX(0.9451);transform-origin:left;">Main profile - Encod...</div><div class="t" style="left:1098.7px;top:778.95px;font-size:14px;line-height:14px;font-weight:400;color:#63739a;transform:scaleX(0.9454);transform-origin:left;">rist://127.0.0.1:8854</div><div class="r" style="left:64px;top:842px;width:26px;height:27px;background:#535a67;"></div><div class="r" style="left:106px;top:842px;width:27px;height:27px;background:#535a67;"></div><div class="t" style="left:157.6px;top:847.95px;font-size:14px;line-height:14px;font-weight:400;color:#63739a;transform:scaleX(0.9262);transform-origin:left;">10.130.2.54</div><div class="t" style="left:358.2px;top:847.95px;font-size:14px;line-height:14px;font-weight:400;color:#63739a;transform:scaleX(0.9247);transform-origin:left;">8854</div><div class="r" style="left:551px;top:842px;width:164px;height:27px;background:#1b2233;box-sizing:border-box;border:1px solid #3d4557"></div><div class="t" style="left:562px;top:847.95px;font-size:14px;line-height:14px;font-weight:400;color:#63739a;transform:scaleX(0.9719);transform-origin:left;">Automatic</div><div class="r" style="left:731px;top:842px;width:26px;height:27px;background:#3a4150;"></div><div class="r" style="left:911px;top:842px;width:163px;height:26px;background:#1b2233;box-sizing:border-box;border:1px solid #3d4557"></div><div class="t" style="left:922px;top:847.95px;font-size:14px;line-height:14px;font-weight:400;color:#63739a;transform:scaleX(0.9451);transform-origin:left;">Main profile - Encod...</div><div class="t" style="left:1098.7px;top:847.95px;font-size:14px;line-height:14px;font-weight:400;color:#63739a;transform:scaleX(0.9454);transform-origin:left;">rist://127.0.0.1:8854</div><div class="r" style="left:64px;top:911px;width:26px;height:27px;background:#535a67;"></div><div class="r" style="left:106px;top:911px;width:27px;height:27px;background:#535a67;"></div><div class="t" style="left:157.6px;top:916.95px;font-size:14px;line-height:14px;font-weight:400;color:#63739a;transform:scaleX(0.9262);transform-origin:left;">10.130.2.58</div><div class="t" style="left:358.2px;top:916.95px;font-size:14px;line-height:14px;font-weight:400;color:#63739a;transform:scaleX(0.9247);transform-origin:left;">8854</div><div class="r" style="left:551px;top:911px;width:164px;height:27px;background:#1b2233;box-sizing:border-box;border:1px solid #3d4557"></div><div class="t" style="left:562px;top:916.95px;font-size:14px;line-height:14px;font-weight:400;color:#63739a;transform:scaleX(0.9719);transform-origin:left;">Automatic</div><div class="r" style="left:731px;top:911px;width:26px;height:27px;background:#3a4150;"></div><div class="r" style="left:911px;top:911px;width:163px;height:26px;background:#1b2233;box-sizing:border-box;border:1px solid #3d4557"></div><div class="t" style="left:922px;top:916.95px;font-size:14px;line-height:14px;font-weight:400;color:#63739a;transform:scaleX(0.9451);transform-origin:left;">Main profile - Encod...</div><div class="t" style="left:1098.7px;top:916.95px;font-size:14px;line-height:14px;font-weight:400;color:#63739a;transform:scaleX(0.9454);transform-origin:left;">rist://127.0.0.1:8854</div><div class="r" style="left:64px;top:954px;width:1212px;height:42px;background:transparent;box-sizing:border-box;border:1px solid #575d6b"></div><div class="r" style="left:72.4px;top:964.4px;width:21.2px;height:21px;background:#008000;border-radius:3px"></div><div class="t" style="left:101.8px;top:968.29px;font-size:13.6px;line-height:13.6px;font-weight:400;color:#e9edf3;transform:scaleX(0.9875);transform-origin:left;">Add item</div><svg style="left:0;top:0" width="1340" height="1060"><path d="M166.6 335.6L172 341L177.4 335.6" stroke="#e9edf3" stroke-width="1.9" fill="none"/><path d="M783.6 335.6L789 341L794.4 335.6" stroke="#e9edf3" stroke-width="1.9" fill="none"/><path d="M183.3 674L188.8 679.3L183.3 684.6" stroke="#e9edf3" stroke-width="1.9" fill="none"/><path d="M634.7 408.0H644.3L639.5 413.4Z" fill="#f2f4f7"/><path d="M634.7 546.4H644.3L639.5 551.8000000000001Z" fill="#f2f4f7"/><path d="M699.5 784.0H709.0999999999999L704.3 789.4000000000001Z" fill="#f2f4f7"/><path d="M1058.5 784.0H1068.1L1063.3 789.4000000000001Z" fill="#f2f4f7"/><path d="M699.5 853.0H709.0999999999999L704.3 858.4000000000001Z" fill="#f2f4f7"/><path d="M1058.5 853.0H1068.1L1063.3 858.4000000000001Z" fill="#f2f4f7"/><path d="M699.5 922.0H709.0999999999999L704.3 927.4000000000001Z" fill="#f2f4f7"/><path d="M1058.5 922.0H1068.1L1063.3 927.4000000000001Z" fill="#f2f4f7"/><rect x="74.39999999999999" y="778.3" width="4.6" height="1.4" rx="0.6" fill="#e9edf3"/><rect x="70.6" y="779.1999999999999" width="12.3" height="2.2" rx="0.4" fill="#e9edf3"/><path d="M71.39999999999999 781.9H82.1V790.5Q82.1 791.9 80.69999999999999 791.9H72.8Q71.39999999999999 791.9 71.39999999999999 790.5Z" fill="#e9edf3"/><rect x="73.89999999999999" y="783.5999999999999" width="1.1" height="6.6" fill="#8d93a0"/><rect x="76.19999999999999" y="783.5999999999999" width="1.1" height="6.6" fill="#8d93a0"/><rect x="78.5" y="783.5999999999999" width="1.1" height="6.6" fill="#8d93a0"/><rect x="74.39999999999999" y="848.3" width="4.6" height="1.4" rx="0.6" fill="#e9edf3"/><rect x="70.6" y="849.1999999999999" width="12.3" height="2.2" rx="0.4" fill="#e9edf3"/><path d="M71.39999999999999 851.9H82.1V860.5Q82.1 861.9 80.69999999999999 861.9H72.8Q71.39999999999999 861.9 71.39999999999999 860.5Z" fill="#e9edf3"/><rect x="73.89999999999999" y="853.5999999999999" width="1.1" height="6.6" fill="#8d93a0"/><rect x="76.19999999999999" y="853.5999999999999" width="1.1" height="6.6" fill="#8d93a0"/><rect x="78.5" y="853.5999999999999" width="1.1" height="6.6" fill="#8d93a0"/><rect x="74.39999999999999" y="917.3" width="4.6" height="1.4" rx="0.6" fill="#e9edf3"/><rect x="70.6" y="918.1999999999999" width="12.3" height="2.2" rx="0.4" fill="#e9edf3"/><path d="M71.39999999999999 920.9H82.1V929.5Q82.1 930.9 80.69999999999999 930.9H72.8Q71.39999999999999 930.9 71.39999999999999 929.5Z" fill="#e9edf3"/><rect x="73.89999999999999" y="922.5999999999999" width="1.1" height="6.6" fill="#8d93a0"/><rect x="76.19999999999999" y="922.5999999999999" width="1.1" height="6.6" fill="#8d93a0"/><rect x="78.5" y="922.5999999999999" width="1.1" height="6.6" fill="#8d93a0"/><path d="M114.2 785.3L118 789L125.2 781.6" stroke="#fff" stroke-width="2.2" fill="none"/><path d="M83 970V980M78 975H88" stroke="#262e3f" stroke-width="2"/></svg>
</body></html>
